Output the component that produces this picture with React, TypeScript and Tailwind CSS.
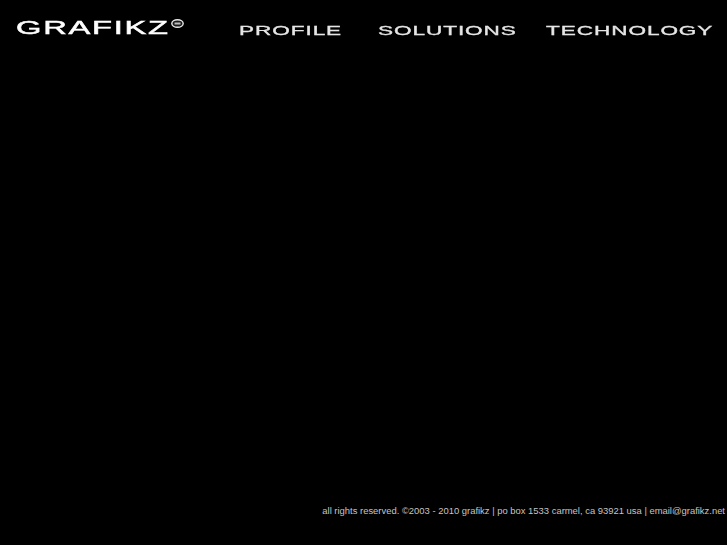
export default function App() {
  const nav = [
    { label: "PROFILE", box: "w-[102px]" },
    { label: "SOLUTIONS", box: "w-[131px]" },
    { label: "TECHNOLOGY", box: "w-[166px]" },
  ];
  return (
    <div className="flex h-[545px] w-[727px] flex-col justify-between overflow-hidden bg-black font-['Liberation_Sans',Arial,sans-serif]">
      <header className="flex items-start pl-[16px]">
        <div className="flex w-[223px] items-start pt-[16px]">
          <span className="block w-[155px] origin-left scale-x-[1.72] whitespace-nowrap text-[19px] leading-[24px] font-normal tracking-[1px] text-white blur-[0.3px] [-webkit-text-stroke:0.5px_white]">
            GRAFIKZ
          </span>
          <svg width="13" height="9" viewBox="0 0 13 9" className="mt-[3px]" aria-hidden="true">
            <ellipse cx="6.5" cy="4.5" rx="5.7" ry="3.8" fill="#1c1c1c" stroke="#e8e8e8" strokeWidth="1.4" />
            <path d="M3.5 3.5h6v2h-6z" fill="#bdbdbd" />
          </svg>
        </div>
        <nav className="flex gap-[37px] pt-[24px]">
          {nav.map((n) => (
            <a key={n.label} className={`block ${n.box}`}>
              <span className="block origin-left scale-x-[1.88] whitespace-nowrap text-[12px] leading-[15px] tracking-[0.5px] text-[#e6e6e6] blur-[0.3px] [-webkit-text-stroke:0.3px_#e6e6e6]">
                {n.label}
              </span>
            </a>
          ))}
        </nav>
      </header>
      <footer className="flex justify-end pr-[2px] pb-[28px]">
        <p className="whitespace-nowrap text-[9.43px] leading-[12px] text-[#c4c4c4]">
          all rights reserved. ©2003 - 2010 grafikz | po box 1533 carmel, ca 93921 usa | email@grafikz.net
        </p>
      </footer>
    </div>
  );
}
